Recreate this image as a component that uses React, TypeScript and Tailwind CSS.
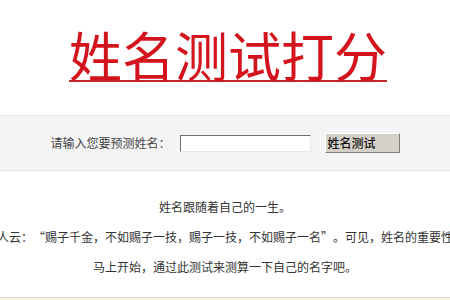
import React from 'react'

const font = { fontFamily: '"Noto Sans CJK SC", "Noto Sans", sans-serif' }

const App = () => {
  return (
    <div lang="zh-CN" className="w-[450px] h-[300px] overflow-hidden bg-white flex flex-col" style={font}>
      <div className="h-[115px] flex justify-center pt-[28px] pl-[6px]">
        <h1 className="text-[53px] leading-[53px] text-[#d4141c] underline decoration-[#c4242a] decoration-2 underline-offset-[3px]">
          姓名测试打分
        </h1>
      </div>

      <div className="h-[56px] bg-[#f4f4f4] border-y border-[#e4e4e4] flex items-center justify-center">
        <span className="text-[12px] text-[#444] mr-[9px]">请输入您要预测姓名：</span>
        <input
          type="text"
          className="w-[131px] h-[17px] bg-white border border-t-[#6f6f6f] border-l-[#6f6f6f] border-b-[#e8e8e8] border-r-[#e8e8e8] outline-none"
        />
        <button className="ml-[14px] w-[75px] h-[20px] bg-[#d4d0c8] text-[12px] leading-none text-[#111] font-medium text-left pl-[2px] border border-t-white border-l-white border-b-[#808080] border-r-[#808080]">
          姓名测试
        </button>
      </div>

      <div className="mt-[21px] flex flex-col text-[12px] leading-[30px] text-[#333]">
        <div className="flex justify-center">姓名跟随着自己的一生。</div>
        <div className="flex justify-center whitespace-nowrap">
          <span>
            古人云：<span className="inline-block w-[12px] text-right">“</span>赐子千金，不如赐子一技，赐子一技，不如赐子一名<span className="inline-block w-[12px] text-left">”</span>。可见，姓名的重要性。
          </span>
        </div>
        <div className="flex justify-center">马上开始，通过此测试来测算一下自己的名字吧。</div>
      </div>

      <div className="mt-auto h-[3px] bg-[#f5f2dc] border-t border-[#e0dcc2]" />
    </div>
  )
}

export default App
